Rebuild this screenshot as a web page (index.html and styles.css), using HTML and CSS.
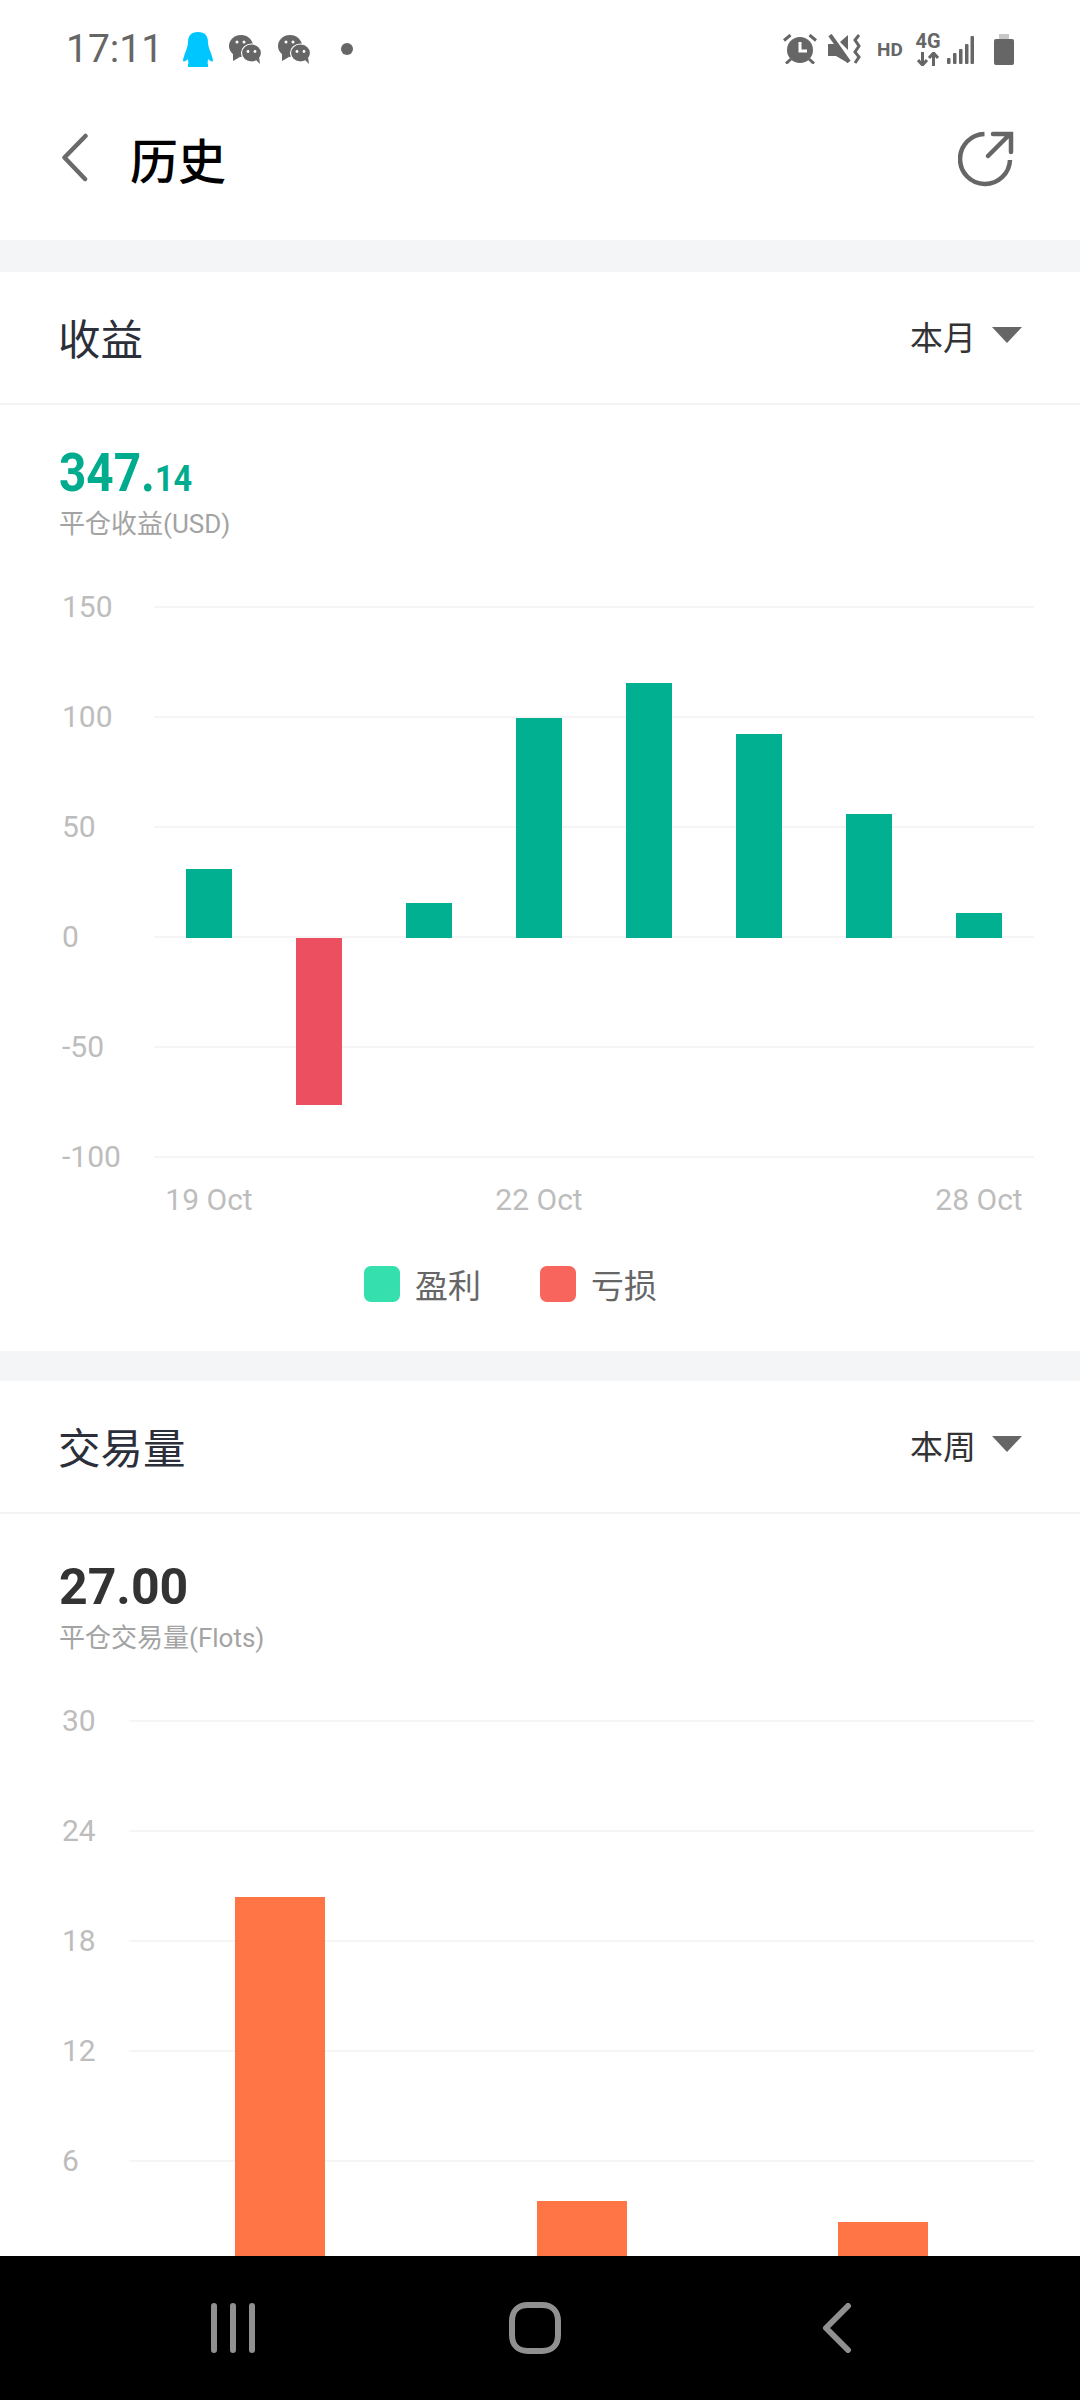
FILE: index.html
```html
<!DOCTYPE html>
<html lang="zh-CN">
<head>
    <meta charset="UTF-8">
    <meta name="viewport" content="width=device-width, initial-scale=1.0">
    <title>历史</title>
    <link rel="stylesheet" href="styles.css">
</head>
<body>
    <!-- Status bar -->
    <div class="status-bar">
        <div class="status-left">
            <span class="time">17:11</span>
            <svg width="30" height="35" viewBox="0 0 30 35"><path fill="#00c6ff" d="M15 0C8 0 5 4 5 10c0 3-1 6-2.500 10C1 24 0 27 0 29c1 1 3 0 5-2 0 3 1 4 0 5v3h20v-3c-1-1 0-2 0-5 2 2 4 3 5 2 0-2-1-5-2.500-9C26 16 25 13 25 10c0-6-3-10-10-10z"/></svg>
            <svg class="wechat" width="33" height="29" viewBox="0 0 33 29"><use href="#wechat-icon"/></svg>
            <svg class="wechat" width="33" height="29" viewBox="0 0 33 29"><use href="#wechat-icon"/></svg>
            <span class="dot"></span>
        </div>
        <div class="status-right">
            <svg width="34" height="30" viewBox="0 0 34 30">
                <circle cx="17" cy="16" r="13" fill="#666"/>
                <path d="M17 8v9h7" fill="none" stroke="#fff" stroke-width="3"/>
                <path d="M1 6.500 7.500 1M33 6.500 26.500 1M8 25l-5 4.500M26 25l5 4.500" stroke="#666" stroke-width="3"/>
            </svg>
            <svg class="mute" width="34" height="30" viewBox="0 0 34 30">
                <path fill="#666" d="M0 10h6l14 15v4L8 22H0zM12 8l8-7v15z"/>
                <path d="M2 1l19 27" stroke="#666" stroke-width="4"/>
                <path d="M31 1l-4 5 4 6-4 6 4 5-4 6" fill="none" stroke="#666" stroke-width="3"/>
            </svg>
            <span class="hd">HD</span>
            <div class="network">
                <span class="network-label">4G</span>
                <svg width="22" height="14" viewBox="0 0 22 14"><path d="M5.500 0v12M1 8l4.500 5L10 8M16.500 14V2M12 6l4.500-5L21 6" fill="none" stroke="#666" stroke-width="3"/></svg>
            </div>
            <svg class="signal" width="27" height="28" viewBox="0 0 27 28">
                <rect x="0" y="22" width="3.500" height="6" rx="1" fill="#666"/>
                <rect x="6" y="17" width="3.500" height="11" rx="1" fill="#666"/>
                <rect x="12" y="13" width="3.500" height="15" rx="1" fill="#666"/>
                <rect x="18" y="8" width="3.500" height="20" rx="1" fill="#666"/>
                <rect x="23.500" y="0" width="3.500" height="28" rx="1" fill="#666"/>
            </svg>
            <svg class="battery" width="20" height="31" viewBox="0 0 20 31">
                <rect x="5" y="0" width="10" height="5" fill="#c8c8c8"/>
                <rect x="0" y="5" width="20" height="26" rx="2" fill="#666"/>
            </svg>
        </div>
    </div>

    <!-- shared symbol for the wechat notification -->
    <svg class="defs" width="0" height="0">
        <symbol id="wechat-icon" viewBox="0 0 33 29">
            <ellipse cx="12" cy="11" rx="12" ry="11" fill="#666"/>
            <path d="M4 18l0 8 7-4z" fill="#666"/>
            <circle cx="8" cy="7" r="1.500" fill="#fff"/>
            <circle cx="15" cy="7" r="1.500" fill="#fff"/>
            <ellipse cx="22.500" cy="18" rx="10" ry="9" fill="#666" stroke="#fff" stroke-width="1.200"/>
            <path d="M27 25l4 4-1-7z" fill="#666"/>
            <circle cx="19" cy="16.500" r="1.400" fill="#fff"/>
            <circle cx="26" cy="16.500" r="1.400" fill="#fff"/>
        </symbol>
    </svg>

    <!-- Title bar -->
    <header class="title-bar">
        <svg class="back" width="26" height="50" viewBox="0 0 26 50"><path d="M23.500 3 2.500 24.500 23 46" fill="none" stroke="#6a6a6a" stroke-width="4.500" stroke-linecap="round" stroke-linejoin="round"/></svg>
        <h1>历史</h1>
        <svg class="share" width="56" height="56" viewBox="0 0 56 56">
            <path d="M26.500 3A25 25 0 1 0 52 29" fill="none" stroke="#666" stroke-width="4.500"/>
            <path d="M30 25 51 4M35 3h18v18" fill="none" stroke="#666" stroke-width="4.500" stroke-linecap="round"/>
        </svg>
    </header>

    <main class="content">
        <div class="gap gap-first"></div>
        <section class="card">
            <div class="card-head">
                <h2>收益</h2>
                <div class="period">本月<span class="caret"></span></div>
            </div>
            <div class="summary">
                <div class="profit"><span class="profit-big">347.</span><span class="profit-small">14</span></div>
                <div class="summary-label">平仓收益(USD)</div>
            </div>

            <div class="chart">
                <div class="tick"><span>150</span><i></i></div>
                <div class="tick"><span>100</span><i></i></div>
                <div class="tick"><span>50</span><i></i></div>
                <div class="tick"><span>0</span><i></i></div>
                <div class="tick"><span>-50</span><i></i></div>
                <div class="tick tick-last"><span>-100</span><i></i></div>
                <div class="bars">
                    <div class="slot"><div class="bar green" style="margin-top:263px;height:69px"></div></div>
                    <div class="slot"><div class="bar red" style="margin-top:332px;height:167px"></div></div>
                    <div class="slot"><div class="bar green" style="margin-top:297px;height:35px"></div></div>
                    <div class="slot"><div class="bar green" style="margin-top:112px;height:220px"></div></div>
                    <div class="slot"><div class="bar green" style="margin-top:77px;height:255px"></div></div>
                    <div class="slot"><div class="bar green" style="margin-top:128px;height:204px"></div></div>
                    <div class="slot"><div class="bar green" style="margin-top:208px;height:124px"></div></div>
                    <div class="slot"><div class="bar green" style="margin-top:307px;height:25px"></div></div>
                </div>
            </div>

            <div class="x-axis">
                <span class="col-1">19 Oct</span>
                <span class="col-4">22 Oct</span>
                <span class="col-8">28 Oct</span>
            </div>

            <div class="legend">
                <div class="legend-item"><span class="swatch swatch-profit"></span>盈利</div>
                <div class="legend-item"><span class="swatch swatch-loss"></span>亏损</div>
            </div>
        </section>

        <div class="gap"></div>
        <section class="card">
            <div class="card-head">
                <h2>交易量</h2>
                <div class="period">本周<span class="caret"></span></div>
            </div>
            <div class="summary summary-volume">
                <div class="volume">27.00</div>
                <div class="summary-label">平仓交易量(Flots)</div>
            </div>

            <!-- the 0 row falls under the nav bar -->
            <div class="chart chart-volume">
                <div class="tick"><span>30</span><i></i></div>
                <div class="tick"><span>24</span><i></i></div>
                <div class="tick"><span>18</span><i></i></div>
                <div class="tick"><span>12</span><i></i></div>
                <div class="tick"><span>6</span><i></i></div>
                <div class="bars">
                    <div class="slot"><div class="bar orange" style="margin-top:177px;height:374px"></div></div>
                    <div class="slot"><div class="bar orange" style="margin-top:481px;height:70px"></div></div>
                    <div class="slot"><div class="bar orange" style="margin-top:502px;height:49px"></div></div>
                </div>
            </div>
        </section>
    </main>

    <!-- Android nav bar -->
    <nav class="nav-bar">
        <svg width="46" height="50" viewBox="0 0 46 50"><path d="M4 3v44M23 3v44M42 3v44" stroke="#909090" stroke-width="6" stroke-linecap="round"/></svg>
        <svg width="52" height="52" viewBox="0 0 52 52"><path d="M19 3h14c10 0 16 6 16 16v14c0 10-6 16-16 16H19C9 49 3 43 3 33V19C3 9 9 3 19 3z" fill="none" stroke="#909090" stroke-width="6"/></svg>
        <svg width="30" height="50" viewBox="0 0 30 50"><path d="M26 3 4 25l22 22" fill="none" stroke="#909090" stroke-width="6" stroke-linecap="round" stroke-linejoin="round"/></svg>
    </nav>
</body>
</html>
```

FILE: styles.css
```css
* {
    box-sizing: border-box;
}

body {
    font-family: Roboto, "Noto Sans CJK SC", sans-serif;
    margin: 0;
    width: 1080px;
    height: 2400px;
    overflow: hidden;
    display: flex;
    flex-direction: column;
    background-color: #ffffff;
}

.defs {
    position: absolute;
}

/* status bar */
.status-bar {
    height: 98px;
    flex: none;
    display: flex;
    justify-content: space-between;
    align-items: center;
    padding: 0 66px 0 66px;
}

.status-left,
.status-right {
    display: flex;
    align-items: center;
}

.status-left {
    gap: 16px;
}

.time {
    font-size: 39px;
    color: #666;
    margin-right: 4px;
}

.dot {
    width: 12px;
    height: 12px;
    border-radius: 50%;
    background-color: #666;
    margin-left: 14px;
}

.mute {
    margin-left: 11px;
}

.hd {
    font-size: 19px;
    font-weight: 700;
    color: #666;
    margin-left: 15px;
    width: 24px;
}

.network {
    display: flex;
    flex-direction: column;
    align-items: center;
    margin-left: 16px;
    width: 22px;
}

.network-label {
    font-size: 20px;
    font-weight: 700;
    line-height: 16px;
    color: #666;
    margin-bottom: 3px;
}

.signal {
    margin-left: 8px;
    margin-top: 2px;
}

.battery {
    margin-left: 20px;
}

/* title bar */
.title-bar {
    height: 122px;
    margin-bottom: 20px;
    flex: none;
    display: flex;
    align-items: center;
    padding: 0 66px 0 62px;
}

.back {
    margin-bottom: 2px;
}

.title-bar h1 {
    margin: 0 0 3px 42px;
    font-size: 48px;
    font-weight: 500;
    color: #000;
}

.share {
    margin-left: auto;
}

/* sections */
.content {
    flex: 1;
    min-height: 0;
    overflow: hidden;
}

.gap {
    height: 30px;
    background-color: #f4f5f7;
}

.gap-first {
    height: 32px;
}

.card-head {
    height: 133px;
    border-bottom: 2px solid #f3f3f3;
    display: flex;
    justify-content: space-between;
    align-items: center;
    padding: 0 58px 3px 58px;
}

.card-head h2 {
    margin: 0;
    font-size: 42.500px;
    font-weight: 400;
    color: #2b2f3a;
}

.period {
    display: flex;
    align-items: center;
    font-size: 33px;
    color: #333;
}

.caret {
    width: 0;
    height: 0;
    margin-left: 16px;
    margin-bottom: 3px;
    border-left: 15px solid transparent;
    border-right: 15px solid transparent;
    border-top: 16px solid #666;
}

.summary {
    padding: 38px 0 0 59px;
}

.summary-volume {
    padding-top: 43px;
}

.profit {
    height: 60px;
    line-height: 60px;
    color: #00ab8e;
    font-weight: 700;
    transform: scaleX(0.9);
    transform-origin: left;
}

.profit-big {
    font-size: 53px;
}

.profit-small {
    font-size: 36px;
}

.volume {
    height: 60px;
    line-height: 60px;
    font-size: 50px;
    font-weight: 700;
    color: #333;
}

.summary-label {
    margin-top: 3px;
    height: 36px;
    line-height: 36px;
    font-size: 26px;
    color: #a3a3a3;
}

/* charts */
.chart {
    position: relative;
    margin: 64px 46px 0 62px;
    --axis-width: 92px;
}

.chart-volume {
    --axis-width: 67px;
}

.tick {
    height: 110px;
    display: flex;
    align-items: flex-start;
}

.tick-last {
    height: 2px;
}

.tick span {
    width: var(--axis-width);
    flex: none;
    font-size: 30px;
    line-height: 2px;
    color: #bdbdbd;
}

.tick i {
    flex: 1;
    height: 2px;
    background-color: #f5f5f5;
}

.bars {
    position: absolute;
    top: 0;
    right: 0;
    left: var(--axis-width);
    display: flex;
}

.slot {
    flex: 1;
    display: flex;
    justify-content: center;
    align-items: flex-start;
}

.bar {
    width: 46px;
}

.bar.green {
    background-color: #00b091;
}

.bar.red {
    background-color: #ec5060;
}

.bar.orange {
    width: 90px;
    background-color: #ff7545;
}

.x-axis {
    display: grid;
    grid-template-columns: repeat(8, 110px);
    margin: 24px 0 0 154px;
    height: 36px;
    line-height: 36px;
    font-size: 30px;
    color: #bdbdbd;
    text-align: center;
}

.col-1 {
    grid-column: 1;
}

.col-4 {
    grid-column: 4;
}

.col-8 {
    grid-column: 8;
}

.legend {
    display: flex;
    justify-content: center;
    margin-top: 48px;
    padding-bottom: 49px;
}

.legend-item {
    display: flex;
    align-items: center;
    height: 36px;
    margin-right: 59px;
    font-size: 33px;
    color: #666;
}

.swatch {
    width: 36px;
    height: 36px;
    margin-right: 15px;
    border-radius: 7px;
}

.swatch-profit {
    background-color: #35dfae;
}

.swatch-loss {
    background-color: #f7655c;
}

/* bottom nav */
.nav-bar {
    height: 144px;
    flex: none;
    background-color: #000;
    display: grid;
    grid-template-columns: repeat(3, 302px);
    justify-items: center;
    align-items: center;
    padding-left: 82px;
}
```
